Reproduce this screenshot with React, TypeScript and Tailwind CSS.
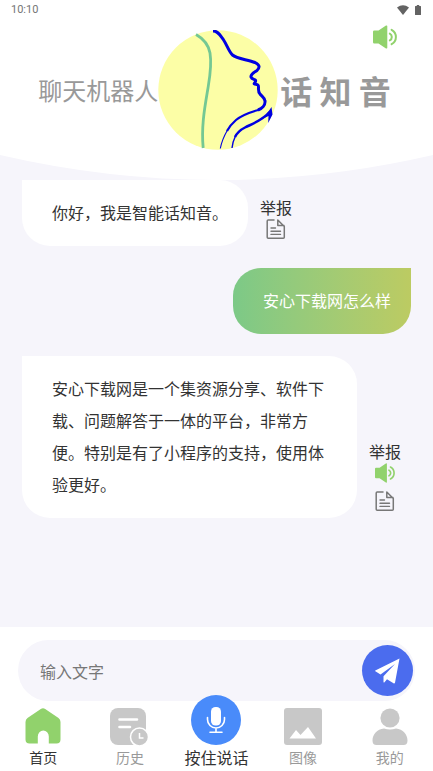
import { useState, type FormEvent, type ReactNode } from "react";
import clsx from "clsx";

type Message = {
  id: number;
  from: "bot" | "user";
  text: string;
  playable?: boolean;
};

type Tab = {
  key: string;
  label: string;
  icon: ReactNode;
};

const messages: Message[] = [
  { id: 1, from: "bot", text: "你好，我是智能话知音。" },
  { id: 2, from: "user", text: "安心下载网怎么样" },
  {
    id: 3,
    from: "bot",
    text: "安心下载网是一个集资源分享、软件下载、问题解答于一体的平台，非常方便。特别是有了小程序的支持，使用体验更好。",
    playable: true,
  },
];

function SpeakerIcon({ className }: { className?: string }) {
  return (
    <svg viewBox="0 0 24 24" className={className} aria-hidden="true">
      <path
        d="M1.2 5.6H5.5L13 .6Q14.3 0 14.3 1.2V22.8Q14.3 24 13 23.4L5.5 18.4H1.2Q0 18.4 0 17.2V6.8Q0 5.6 1.2 5.6Z"
        fill="currentColor"
      />
      <path
        d="M16.8 8.6Q18.8 9.6 18.8 12T16.8 15.4M18.6 4.8Q22.9 7.2 22.9 12T18.6 19.2"
        fill="none"
        stroke="currentColor"
        strokeWidth="2"
        strokeLinecap="round"
      />
    </svg>
  );
}

function DocIcon({ className }: { className?: string }) {
  return (
    <svg
      viewBox="0 0 20 20"
      className={className}
      fill="none"
      stroke="currentColor"
      strokeWidth="1.5"
      strokeLinecap="round"
      strokeLinejoin="round"
      aria-hidden="true"
    >
      <path d="M8 1H2.2Q1.2 1 1.2 2V18.2Q1.2 19.2 2.2 19.2H17.3Q18.3 19.2 18.3 18.2V7.5L11.8 1V6.6H18" />
      <path d="M5 9H9.5M5 12.2H14.5M5 15.4H14.5" strokeWidth="1.4" />
    </svg>
  );
}

function Logo() {
  return (
    <svg viewBox="0 0 120 120" className="size-30 shrink-0" fill="none" role="img" aria-label="话知音">
      <circle cx="60" cy="60" r="59.7" fill="#fcfea6" />
      <path
        d="M38 4.5C46 9 50.5 15 52 23C54 35 52 46 50 58C47 76 43 96 45.2 118"
        stroke="#74c893"
        strokeWidth="2.8"
      />
      <g stroke="#0000e1" strokeLinejoin="round">
        <path
          d="M55 1C60 1 62 5 65 9C69 15 71 22 74.5 25C79 29 90 29.5 97 32.5C102 35 102 37.5 99 40.5C96 42.5 92.5 44 93 47C94 50 98.5 49 97.5 51.5C97 53 95.5 53.5 96.5 54C99 54.5 100.5 54 100.5 57C100.5 60 100 62 102 64C104 66.5 107 68 107 71C107.5 75 104 78.5 100 80"
          strokeWidth="3"
        />
        <path d="M101 79.7C91 82.5 84 85 78 90C74 93.5 71 97 69 101" strokeWidth="2.2" />
        <path d="M69.5 100C65.500 107 63.5 112 62.3 118.5" strokeWidth="1.1" />
        <path d="M111.500 82C105 90 95 93.500 87 97.500C82 100 79 103 77 107" strokeWidth="2.500" />
        <path d="M77.5 106C75.500 110 74.5 113 74 118" strokeWidth="1.4" />
      </g>
      <path d="M113.500 77L114.5 84.5L110.2 93L110.5 86L106 88Z" fill="#0000e1" />
    </svg>
  );
}

function HomeIcon() {
  return (
    <svg viewBox="0 0 36 36" className="size-9" fill="#91d26c" aria-hidden="true">
      <path d="M15.8 .9Q18 -.5 20.2 .9L33.5 10Q35.5 11.5 35.5 14V31.5Q35.5 35.5 31.5 35.5H23.8V28.5A5.5 6 0 0 0 12.8 28.5V35.5H4.5Q.5 35.5 .5 31.5V14Q.5 11.5 2.5 10Z" />
    </svg>
  );
}

function HistoryIcon() {
  return (
    <svg viewBox="0 0 39 38" className="h-[38px] w-[39px]" aria-hidden="true">
      <rect width="36" height="37" rx="8" fill="#c8c8c8" />
      <path d="M9.5 11.5H27M9.5 19H20" stroke="#fff" strokeWidth="2.6" strokeLinecap="round" />
      <circle cx="29.5" cy="29" r="9" fill="#c8c8c8" stroke="#fff" strokeWidth="1.5" />
      <path d="M29.5 25V30H33.5" fill="none" stroke="#fff" strokeWidth="1.5" />
    </svg>
  );
}

function MicIcon() {
  return (
    <svg viewBox="0 0 20 28" className="h-7 w-5" fill="none" aria-hidden="true">
      <rect x="5" y="1" width="10" height="18.5" rx="4.6" fill="#fff" />
      <path
        d="M1.5 11.5V13.5A8.5 8.5 0 0 0 18.5 13.5V11.5M10 22V26M4 26.3H16"
        stroke="#fff"
        strokeWidth="1.6"
        strokeLinecap="round"
      />
    </svg>
  );
}

function ImageIcon() {
  return (
    <svg viewBox="0 0 38 37" className="h-[37px] w-[38px]" aria-hidden="true">
      <rect width="38" height="37" rx="3" fill="#c8c8c8" />
      <path d="M5.5 30.5L12 22L16.5 27L24 19L32 30.5Z" fill="#fff" />
    </svg>
  );
}

function UserIcon() {
  return (
    <svg viewBox="0 0 36 37" className="h-[37px] w-9" fill="#c8c8c8" aria-hidden="true">
      <circle cx="18" cy="10" r="9.6" />
      <path d="M12 20.5Q18 22.5 24 20.5C31 21 35.5 26.5 35.5 32.5Q35.5 37 31.5 37H4.5Q.5 37 .5 32.5C.5 26.5 5 21 12 20.5Z" />
    </svg>
  );
}

const tabs: Tab[] = [
  { key: "home", label: "首页", icon: <HomeIcon /> },
  { key: "history", label: "历史", icon: <HistoryIcon /> },
  { key: "talk", label: "按住说话", icon: <MicIcon /> },
  { key: "image", label: "图像", icon: <ImageIcon /> },
  { key: "mine", label: "我的", icon: <UserIcon /> },
];

function StatusBar() {
  return (
    <div className="flex h-5 items-center justify-between pr-3 pl-[11px] font-[Roboto,sans-serif] text-[11px] text-[#757575]">
      <span>10:10</span>
      <span className="flex items-center gap-1.5 text-[#636363]">
        <svg viewBox="0 0 12 10" className="h-2.5 w-3" fill="currentColor" aria-hidden="true">
          <path d="M0 2.5Q6 -2 12 2.5L6 10Z" />
        </svg>
        <svg viewBox="0 0 6 10" className="h-2.5 w-1.5" fill="currentColor" aria-hidden="true">
          <path d="M1.8 0H4.2V1H5.5Q6 1 6 1.5V9.5Q6 10 5.5 10H.5Q0 10 0 9.5V1.5Q0 1 .5 1H1.8Z" />
        </svg>
      </span>
    </div>
  );
}

function Header() {
  return (
    <header className="relative isolate pb-[30px]">
      <svg
        viewBox="0 0 433 180"
        preserveAspectRatio="none"
        className="absolute inset-0 -z-10 size-full"
        aria-hidden="true"
      >
        <path d="M0 0H433V155Q216.5 205 0 155Z" fill="#fff" />
      </svg>
      <StatusBar />
      <h1 className="flex items-center justify-center pt-2.5 pr-1 text-2xl text-[#999]">
        <span>聊天机器人</span>
        <Logo />
        <span className="ml-0.5 font-[STXingkai,KaiTi,'Noto_Sans_CJK_SC',sans-serif] text-[32px] leading-10 font-bold">
          话 知 音
        </span>
      </h1>
      <button type="button" aria-label="朗读" className="absolute top-[25px] right-9 text-[#91d26c]">
        <SpeakerIcon className="size-6" />
      </button>
    </header>
  );
}

function ChatMessage({ message }: { message: Message }) {
  const isUser = message.from === "user";
  return (
    <li className={clsx("flex items-end gap-3", isUser && "justify-end")}>
      <p
        className={clsx(
          "rounded-[28px] pt-4 pr-5 pb-[18px] pl-[30px] leading-8",
          isUser
            ? "rounded-tr-none bg-linear-to-r from-[#7cc987] to-[#bccb62] text-white"
            : "rounded-tl-none bg-white text-[#333]",
        )}
      >
        {message.text}
      </p>
      {!isUser && (
        <div className="mr-2.5 flex shrink-0 flex-col items-center pb-[7px] text-[#333]">
          <span className="leading-6">举报</span>
          {message.playable && (
            <button type="button" aria-label="播放" className="mb-2 text-[#91d26c]">
              <SpeakerIcon className="size-5" />
            </button>
          )}
          <button type="button" aria-label="举报" className="text-[#777]">
            <DocIcon className="size-5" />
          </button>
        </div>
      )}
    </li>
  );
}

function Composer() {
  const [text, setText] = useState("");

  const onSubmit = (e: FormEvent) => {
    e.preventDefault();
    setText("");
  };

  return (
    <form
      onSubmit={onSubmit}
      className="mx-[18px] flex items-center rounded-full bg-[#f6f5fb] py-[5px] pr-0.5 pl-[22px]"
    >
      <input
        type="text"
        aria-label="输入文字"
        placeholder="输入文字"
        value={text}
        onChange={(e) => setText(e.target.value)}
        className="min-w-0 flex-1 bg-transparent outline-none placeholder:text-[#777]"
      />
      <button
        type="submit"
        aria-label="发送"
        className="flex size-[51px] shrink-0 items-center justify-center rounded-full bg-[#4b6cee]"
      >
        <svg viewBox="0 0 25 26" className="h-[26px] w-[25px]" fill="#fff" aria-hidden="true">
          <path d="M24.5 .5L.3 12.5Q-.2 13 .4 13.3L5.5 16.5L20 6L8.5 18.2V24Q8.8 25 9.5 24.2L12 21.2L18.5 25.3Q19.5 25.8 20 24.8Z" />
        </svg>
      </button>
    </form>
  );
}

export default function App() {
  const [active, setActive] = useState("home");

  return (
    <div className="flex min-h-screen flex-col bg-[#f6f5fb] font-['Noto_Sans_CJK_SC',sans-serif] text-base">
      <Header />
      <main className="flex-1 px-[22px]">
        <ul className="flex flex-col gap-[22px]">
          {messages.map((m) => (
            <ChatMessage key={m.id} message={m} />
          ))}
        </ul>
      </main>
      <footer className="bg-white pt-[13px]">
        <Composer />
        <nav className="grid grid-cols-5">
          {tabs.map((tab) => {
            const isTalk = tab.key === "talk";
            return (
              <button
                key={tab.key}
                type="button"
                onClick={() => setActive(tab.key)}
                className={clsx(
                  "flex h-[70px] flex-col items-center justify-end pb-0.5 whitespace-nowrap",
                  isTalk || active === tab.key ? "text-[#333]" : "text-[#999]",
                )}
              >
                {isTalk ? (
                  <span className="flex size-[50px] shrink-0 items-center justify-center rounded-full bg-[#498bfa]">
                    {tab.icon}
                  </span>
                ) : (
                  <span className="flex h-[37px] shrink-0 items-start">{tab.icon}</span>
                )}
                <span className={isTalk ? "text-base leading-6" : "text-sm leading-6"}>
                  {tab.label}
                </span>
              </button>
            );
          })}
        </nav>
      </footer>
    </div>
  );
}
